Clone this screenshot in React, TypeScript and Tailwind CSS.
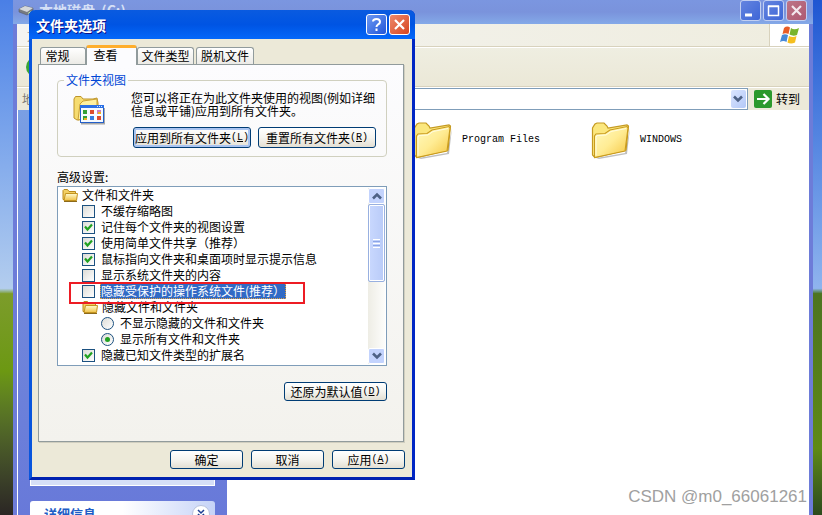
import React, { useState } from "react";

const settings = [
  { type: "folder", label: "文件和文件夹", level: 0 },
  { type: "checkbox", label: "不缓存缩略图", level: 1, on: false },
  { type: "checkbox", label: "记住每个文件夹的视图设置", level: 1, on: true },
  { type: "checkbox", label: "使用简单文件共享（推荐）", level: 1, on: true },
  { type: "checkbox", label: "鼠标指向文件夹和桌面项时显示提示信息", level: 1, on: true },
  { type: "checkbox", label: "显示系统文件夹的内容", level: 1, on: false },
  { type: "checkbox", label: "隐藏受保护的操作系统文件(推荐）", level: 1, on: false, selected: true },
  { type: "folder", label: "隐藏文件和文件夹", level: 1 },
  { type: "radio", label: "不显示隐藏的文件和文件夹", level: 2, on: false },
  { type: "radio", label: "显示所有文件和文件夹", level: 2, on: true },
  { type: "checkbox", label: "隐藏已知文件类型的扩展名", level: 1, on: true },
];

const indents = ["pl-1", "pl-6", "pl-[43px]"];

const SmallFolder = () => (
  <svg className="h-4 w-4 shrink-0" viewBox="0 0 16 16" aria-hidden="true">
    <defs>
      <linearGradient id="sf" x1="0" y1="0" x2="0" y2="1">
        <stop offset="0" stopColor="#fffbd0" />
        <stop offset="1" stopColor="#f0c248" />
      </linearGradient>
    </defs>
    <path d="M1 12.5V3.5L2 2.5H5.5L7 4.5H13.5V12.5Z" fill="#f2cf62" stroke="#b98a1c" />
    <path d="M2 13.5L3.5 6.5H15.5L14.5 13.5Z" fill="url(#sf)" stroke="#c4941f" />
    <path d="M2 14.5H15" stroke="#8c6a1c" />
  </svg>
);

const BigFolder = () => (
  <svg className="h-10 w-10 shrink-0" viewBox="0 0 40 40" aria-hidden="true">
    <defs>
      <linearGradient id="bf" x1="0" y1="0" x2="1" y2="1">
        <stop offset="0" stopColor="#fffac0" />
        <stop offset="0.5" stopColor="#ffec94" />
        <stop offset="1" stopColor="#f5c640" />
      </linearGradient>
    </defs>
    <path d="M5 38L34 33L39 8L36 34L8 39Z" fill="#000" opacity="0.25" />
    <path d="M1.500 35V8L4 4L6 3H13L16 6L17 8L36 5L37.500 6L35 30L4 37.500Z" fill="#fbe77e" stroke="#c59a22" strokeWidth="1.2" />
    <path d="M3.500 37.500V16L5 14L14 13.500L19 10L36 6.500L37 8L34 31Z" fill="url(#bf)" stroke="#c99b1d" strokeWidth="1.1" />
    <path d="M5 35.500V17.500L6 15.500L15 15L20 11.500L35 8.500" fill="none" stroke="#fffde0" />
  </svg>
);

const ViewIcon = () => (
  <svg className="mt-1 h-8 w-8" viewBox="0 0 32 32" aria-hidden="true">
    <path d="M1 23V4L2.500 1.500H8L10 4H20L24 3L25 8V23L4 25Z" fill="#f6dc70" stroke="#bd9429" />
    <path d="M5 25L7 9L10 6L24 4V20Z" fill="#fff1a0" stroke="#c9a035" />
    <path d="M8 28.500H32V13" fill="none" stroke="#555" opacity="0.5" strokeWidth="2" />
    <rect x="7.500" y="10.500" width="23" height="17" fill="#f6faff" stroke="#235fc9" />
    <path d="M7 11.500H31" stroke="#2a70e6" strokeWidth="3" />
    <path d="M24 11.500h1m1 0h1m1 0h1" stroke="#d8e7ff" />
    <path d="M10 17h4M10 23h4" stroke="#36a038" strokeWidth="4" />
    <path d="M17 17h4M24 23h4" stroke="#dd4b2e" strokeWidth="4" />
    <path d="M24 17h4" stroke="#cf7dbb" strokeWidth="4" />
    <path d="M17 23h4" stroke="#377ce0" strokeWidth="4" />
    <path d="M11 24h3M25 18h3" stroke="#eeb21e" strokeWidth="2" />
  </svg>
);

const Chevron = ({ up = false }: { up?: boolean }) => (
  <svg className="h-2 w-3" viewBox="0 0 12 8" fill="none" aria-hidden="true">
    <path d={up ? "M2 6.500L6 2.500L10 6.500" : "M2 1.500L6 5.500L10 1.500"} stroke="#4d6185" strokeWidth="2.600" />
  </svg>
);

const XpButton = ({ label, hotkey, className = "" }: { label: string; hotkey?: string; className?: string }) => (
  <button
    type="button"
    className={`flex items-center justify-center whitespace-nowrap rounded-[3px] border border-[#003c74] bg-linear-to-b from-white via-[#f5f4ef] to-[#e3dfd3] leading-3 ${className}`}
  >
    {label}
    {hotkey && (
      <span className="font-['Liberation_Mono',monospace] text-[10px]">
        (<u>{hotkey}</u>)
      </span>
    )}
  </button>
);

const Explorer = () => (
  <div className="flex h-screen min-w-0 grow flex-col border-r-4 border-l-4 border-[#6d7cd8]">
    <header className="-mx-1 flex h-6 shrink-0 justify-between bg-linear-to-b from-[#7b96e0] via-[#7a93dc] to-[#84a9e8]">
      <div className="flex items-start pl-[5px]">
        <svg className="mt-1 h-3 w-4" viewBox="0 0 16 12" aria-hidden="true">
          <path d="M1 5L7 2L15 4V7L9 11L1 8Z" fill="#777b80" stroke="#4e5560" strokeWidth="0.500" />
          <path d="M1 5L7 2L15 4L9 8Z" fill="#d5d8da" />
          <path d="M10 9.500L13 7.500" stroke="#b8e7a8" />
        </svg>
        <h1 className="pl-[5px] text-[14px] leading-5 font-bold whitespace-pre text-[#d6e0f6]">本地磁盘  (C:)</h1>
      </div>
      <div className="flex gap-[2px] pr-[6px]">
        <button type="button" aria-label="最小化" className="h-[21px] w-[21px] rounded-[3px] border border-[#c1cff2] bg-linear-to-br from-[#6484df] to-[#3e66d7]">
          <svg viewBox="0 0 19 19" aria-hidden="true"><path d="M4 14H11" stroke="#fff" strokeWidth="3" /></svg>
        </button>
        <button type="button" aria-label="最大化" className="h-[21px] w-[21px] rounded-[3px] border border-[#c1cff2] bg-linear-to-br from-[#6484df] to-[#3e66d7]">
          <svg viewBox="0 0 19 19" fill="none" aria-hidden="true"><path d="M4.500 14.500V5.500H14.500V14.500Z M4 5H15" stroke="#fff" strokeWidth="1.500" /></svg>
        </button>
        <button type="button" aria-label="关闭" className="h-[21px] w-[21px] rounded-[3px] border border-[#c1cff2] bg-linear-to-br from-[#bd7587] to-[#ae5972]">
          <svg viewBox="0 0 19 19" aria-hidden="true"><path d="M5 5L14 14M14 5L5 14" stroke="#f3e8ee" strokeWidth="2.200" /></svg>
        </button>
      </div>
    </header>

    <nav className="flex h-[23px] shrink-0 items-stretch justify-between border-b border-[#d8d2bd] bg-linear-to-r from-[#f4f4f2] to-[#efeddf]">
      <span className="pl-[10px] leading-6 text-[#9a9a94]">文件</span>
      <div className="flex w-10 items-center justify-center border-l border-[#d8d2bd] bg-white">
        <svg className="h-5 w-5" viewBox="0 0 20 20" aria-hidden="true">
          <path d="M4 3Q7 .5 10 2.500L8.500 9Q5.500 7.500 2.500 9Z" fill="#e95d26" />
          <path d="M11 3Q14 5.500 19 3L17 10Q13 11.500 9.500 9.500Z" fill="#79b52c" />
          <path d="M2 10Q5 8.500 8 10L6.500 17Q3.500 15 0 17Z" fill="#4789d8" />
          <path d="M9 11Q13 13 16.500 11L15 17.500Q11 19.500 7.500 17.500Z" fill="#f5bf1f" />
        </svg>
      </div>
    </nav>

    <div className="flex h-10 shrink-0 items-center border-t border-b border-t-white border-b-[#d8d2bd] bg-linear-to-b from-[#efeee1] to-[#ebe8d7] pl-[9px]">
      <span className="h-5 w-5 rounded-full bg-[#3aa536]" />
    </div>

    <div className="flex h-[23px] shrink-0 items-center border-t border-white bg-[#ece9d9] pl-[5px]">
      <label htmlFor="address" className="w-20 text-[#7c7b74]">地址</label>
      <div className="relative flex h-[22px] grow">
        <select id="address" className="w-full appearance-none border border-[#7f9db9] bg-white">
          <option value="" />
        </select>
        <span className="pointer-events-none absolute top-[2px] right-[2px] flex h-[18px] w-[15px] items-center justify-center rounded-[2px] bg-linear-to-br from-[#dae5ff] to-[#b3c8f7]">
          <Chevron />
        </span>
      </div>
      <button type="button" className="flex items-center gap-1 pr-[9px] pl-[6px]">
        <svg className="h-[18px] w-[18px]" viewBox="0 0 18 18" fill="none" aria-hidden="true">
          <rect width="18" height="18" rx="2" fill="#2b992d" />
          <path d="M3 9H14M9.500 4L14.500 9L9.500 14" stroke="#fff" strokeWidth="2.200" />
        </svg>
        转到
      </button>
    </div>

    <div className="flex min-h-0 grow overflow-hidden bg-white">
      <aside className="ml-px flex w-[209px] shrink-0 flex-col gap-[15px] overflow-hidden bg-linear-to-b from-[#7a9fe4] via-[#6f86db] to-[#6879d9] px-3">
        <div className="h-[376px] shrink-0 border border-t-0 border-white bg-[#d6dff7]" />
        <div className="flex h-[25px] shrink-0 items-center justify-between rounded-t-[3px] bg-linear-to-r from-white via-white to-[#c6d3f7] pr-[5px] pl-[14px]">
          <h2 className="text-[13px] font-bold text-[#215dc6]">详细信息</h2>
          <button type="button" aria-label="展开" className="h-[18px] w-[18px] rounded-full border border-[#b8c2dd] bg-white">
            <svg viewBox="0 0 16 16" fill="none" aria-hidden="true"><path d="M5 4L8 7L11 4M5 8L8 11L11 8" stroke="#1f3f93" strokeWidth="1.500" /></svg>
          </button>
        </div>
      </aside>
      <main className="grid flex-1 auto-cols-[178px] grid-flow-col items-start pt-[10px] pl-[186px] font-['Liberation_Mono',monospace] text-[10px]">
        <div className="flex items-center gap-[9px]">
          <BigFolder />
          <span>Program Files</span>
        </div>
        <div className="flex items-center gap-[9px]">
          <BigFolder />
          <span>WINDOWS</span>
        </div>
      </main>
    </div>
  </div>
);

const SettingRow = ({ item, index }: { item: any; index: number }) => {
  const [on, setOn] = useState(!!item.on);
  const id = "setting-" + index;

  if (item.type === "folder") {
    return (
      <li className={`flex h-4 items-center gap-1 ${indents[item.level]}`}>
        <SmallFolder />
        <span>{item.label}</span>
      </li>
    );
  }
  return (
    <li className={`flex h-4 items-center gap-[6px] ${indents[item.level]}`}>
      <span className="relative flex h-[13px] w-[13px] shrink-0">
        <input
          id={id}
          type={item.type}
          name={item.type === "radio" ? "hidden-files" : id}
          checked={on}
          onChange={(e) => setOn(e.target.checked)}
          className={`h-[13px] w-[13px] appearance-none border border-[#1c5180] bg-linear-to-br from-[#dcdcd7] to-white ${item.type === "radio" ? "rounded-full" : ""}`}
        />
        {on && (
          <svg className="pointer-events-none absolute inset-0" viewBox="0 0 13 13" fill="none" aria-hidden="true">
            {item.type === "radio" ? (
              <circle cx="6.500" cy="6.500" r="2.500" fill="#21a121" />
            ) : (
              <path d="M3 5.500L5.500 8.500L10 3.500" stroke="#21a121" strokeWidth="2.200" />
            )}
          </svg>
        )}
      </span>
      <label
        htmlFor={id}
        className={item.selected ? "-ml-px flex h-4 items-center border border-dotted border-[#e0a040] bg-[#316ac5] text-white" : ""}
      >
        {item.label}
      </label>
    </li>
  );
};

const FolderOptions = () => (
  <section
    role="dialog"
    aria-label="文件夹选项"
    className="absolute top-[10px] left-[29px] w-[386px] rounded-t-[6px] border-[3px] border-t-0 border-r-[#0026c4] border-b-[#0021b0] border-l-[#0855dd] bg-[#ece9d8]"
  >
    <header className="-mx-[3px] flex h-[29px] items-center justify-between rounded-t-[6px] bg-linear-to-b from-[#0a5be0] via-[#0054e3] to-[#0468fa] pr-[5px] pl-[7px]">
      <h2 className="text-[14px] font-bold text-white [text-shadow:1px_1px_#0f1089]">文件夹选项</h2>
      <div className="flex gap-[2px]">
        <button type="button" aria-label="帮助" className="h-[21px] w-[21px] rounded-[3px] border border-white bg-linear-to-br from-[#6d98f2] to-[#2255d8]">
          <svg viewBox="0 0 19 19" fill="none" aria-hidden="true"><path d="M6 6.500Q6 4 9.500 4T13 7Q13 8.500 11 9.500Q9.500 10.500 9.500 12M9.500 13.500V16" stroke="#fff" strokeWidth="2" /></svg>
        </button>
        <button type="button" aria-label="关闭" className="h-[21px] w-[21px] rounded-[3px] border border-white bg-linear-to-br from-[#ed8869] to-[#d6431d]">
          <svg viewBox="0 0 19 19" aria-hidden="true"><path d="M5 5L14 14M14 5L5 14" stroke="#fff" strokeWidth="2.200" /></svg>
        </button>
      </div>
    </header>

    <div className="pt-[6px] pr-[7px] pb-2 pl-[6px]">
      <div role="tablist" className="flex h-[19px] items-end pl-[2px]">
        <button type="button" role="tab" className="h-[17px] w-[46px] rounded-t-[3px] border border-b-0 border-[#919b9c] bg-linear-to-b from-white to-[#ecebe6] pr-[11px] leading-4">常规</button>
        <button type="button" role="tab" aria-selected="true" className="z-10 -mb-px h-5 w-[51px] rounded-t-[3px] border-x border-t-[3px] border-x-[#919b9c] border-t-[#ffae2c] bg-[#fcfcfe] pr-3 pb-1 leading-3">查看</button>
        <button type="button" role="tab" className="h-[17px] w-[57px] whitespace-nowrap rounded-t-[3px] border border-b-0 border-[#919b9c] bg-linear-to-b from-white to-[#ecebe6] text-center leading-4">文件类型</button>
        <button type="button" role="tab" className="ml-[2px] h-[17px] w-[58px] whitespace-nowrap rounded-t-[3px] border border-b-0 border-[#919b9c] bg-linear-to-b from-white to-[#ecebe6] text-center leading-4">脱机文件</button>
      </div>

      <div className="mr-px h-[378px] border border-[#919b9c] bg-linear-to-b from-[#fcfcfe] to-[#f3f2ed] pt-[7px] pr-4 pl-[18px] shadow-[1px_1px_#d0cebf]">
        <fieldset className="h-[85px] rounded-[4px] border border-[#d0d0bf] pr-2 pl-[15px]">
          <legend className="-ml-[9px] px-[2px] leading-4 text-[#0046d5]">文件夹视图</legend>
          <div className="flex gap-[26px] pt-[3px]">
            <ViewIcon />
            <p className="whitespace-nowrap leading-[13px]">
              您可以将正在为此文件夹使用的视图(例如详细
              <br />
              信息或平铺)应用到所有文件夹。
            </p>
          </div>
          <div className="flex justify-end gap-[7px] pr-[2px]">
            <XpButton label="应用到所有文件夹" hotkey="L" className="h-[21px] w-[118px] inset-ring-2 inset-ring-[#a9c4f1]" />
            <XpButton label="重置所有文件夹" hotkey="R" className="h-[21px] w-[118px]" />
          </div>
        </fieldset>

        <h3 className="mt-3 leading-4">高级设置:</h3>
        <div className="mt-px flex h-[180px] justify-between border border-[#7f9db9] bg-white">
          <div className="relative">
            <ul className="whitespace-nowrap">
              {settings.map((item, i) => (
                <SettingRow key={i} item={item} index={i} />
              ))}
            </ul>
            <div className="pointer-events-none absolute top-[95px] left-[11px] h-[22px] w-[236px] border-2 border-[#ed1c24]" />
          </div>
          <div className="my-px mr-px flex w-[17px] flex-col bg-linear-to-r from-[#eeede5] to-[#fdfdfb]">
            <button type="button" aria-label="向上" className="flex h-4 items-center justify-center rounded-[2px] border border-white bg-[#c3d3fd]"><Chevron up /></button>
            <div className="flex h-[78px] flex-col items-center justify-center gap-px rounded-[2px] border border-[#98b0e0] bg-linear-to-r from-[#c9d8fe] to-[#b9cbf8] inset-ring inset-ring-white">
              <i className="h-px w-[7px] bg-white" />
              <i className="h-px w-[7px] bg-[#8ca5e6]" />
              <i className="h-px w-[7px] bg-white" />
              <i className="h-px w-[7px] bg-[#8ca5e6]" />
              <i className="h-px w-[7px] bg-white" />
            </div>
            <button type="button" aria-label="向下" className="mt-auto flex h-4 items-center justify-center rounded-[2px] border border-white bg-[#c3d3fd]"><Chevron /></button>
          </div>
        </div>
        <div className="mt-4 flex justify-end">
          <XpButton label="还原为默认值" hotkey="D" className="h-[19px] w-[103px]" />
        </div>
      </div>

      <div className="mt-2 flex justify-end gap-2">
        <XpButton label="确定" className="h-[19px] w-[73px]" />
        <XpButton label="取消" className="h-[19px] w-[73px]" />
        <XpButton label="应用" hotkey="A" className="h-[19px] w-[73px]" />
      </div>
    </div>
  </section>
);

const App = () => {
  return (
    <div className="relative flex h-screen overflow-hidden bg-[#4d82e4] font-['Noto_Sans_CJK_SC',sans-serif] text-[12px] leading-4 text-black">
      <div className="w-[13px] shrink-0 bg-linear-to-b from-[#4a7fe6] from-0% via-[#b3cdee] via-56% to-[#7f9e2c] to-57%">
        <div className="mt-[57vh] h-[43vh] bg-linear-to-b from-[#7c9c2a] via-[#6c9812] via-35% to-[#2b2624]" />
      </div>
      <Explorer />
      <div className="w-[9px] shrink-0 bg-linear-to-b from-[#1f56d2] from-0% via-[#8fb4ee] via-56% to-[#4d7420] to-57%">
        <div className="mt-[57vh] h-[43vh] bg-linear-to-b from-[#4d7420] via-[#5f8a15] via-70% to-[#2c4a1c]" />
      </div>
      <FolderOptions />
      <p className="absolute right-[15px] bottom-2 font-['Liberation_Sans',sans-serif] text-[17px] leading-5 text-[#a0a0a0]">CSDN @m0_66061261</p>
    </div>
  );
};

export default App;
